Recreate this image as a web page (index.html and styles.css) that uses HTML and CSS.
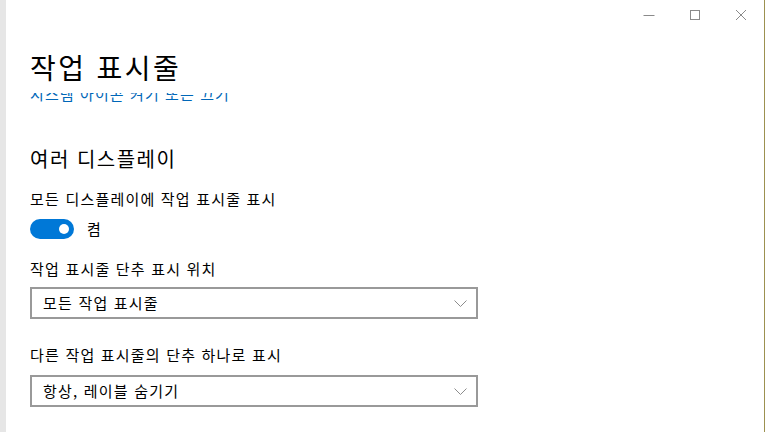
FILE: index.html
```html
<!DOCTYPE html>
<html lang="ko">
<head>
<meta charset="utf-8">
<link rel="stylesheet" href="styles.css">
</head>
<body>
<div class="window">
  <div class="strip"></div>
  <div class="main">
    <div class="titlebar">
      <button class="ctl" aria-label="최소화">
        <svg width="12" height="12" viewBox="0 0 12 12"><path d="M0.5 6.5h11" stroke="#8a8a8a" stroke-width="1" fill="none"/></svg>
      </button>
      <button class="ctl" aria-label="최대화">
        <svg width="12" height="12" viewBox="0 0 12 12"><rect x="1.5" y="1.5" width="9" height="9" stroke="#8a8a8a" stroke-width="1" fill="none"/></svg>
      </button>
      <button class="ctl" aria-label="닫기">
        <svg width="12" height="12" viewBox="0 0 12 12"><path d="M1 1L11 11M11 1L1 11" stroke="#8a8a8a" stroke-width="1" fill="none"/></svg>
      </button>
    </div>
    <header class="header">
      <h1 class="title">작업 표시줄</h1>
    </header>
    <div class="scroller">
      <div class="content">
        <a class="link" href="#">시스템 아이콘 켜기 또는 끄기</a>
        <h2 class="section">여러 디스플레이</h2>
        <div class="label first">모든 디스플레이에 작업 표시줄 표시</div>
        <div class="toggle-row">
          <span class="toggle"><span class="knob"></span></span>
          <span class="toggle-text">켬</span>
        </div>
        <div class="label">작업 표시줄 단추 표시 위치</div>
        <div class="select first-select">
          <span class="select-text">모든 작업 표시줄</span>
          <svg class="chev" width="13" height="7" viewBox="0 0 13 7"><path d="M0.5 0.5L6.5 6.5L12.5 0.5" stroke="#8c8c8c" stroke-width="1" fill="none"/></svg>
        </div>
        <div class="label gap">다른 작업 표시줄의 단추 하나로 표시</div>
        <div class="select">
          <span class="select-text">항상, 레이블 숨기기</span>
          <svg class="chev" width="13" height="7" viewBox="0 0 13 7"><path d="M0.5 0.5L6.5 6.5L12.5 0.5" stroke="#8c8c8c" stroke-width="1" fill="none"/></svg>
        </div>
      </div>
    </div>
  </div>
  <div class="edge"></div>
</div>
</body>
</html>
```

FILE: styles.css
```css
html, body {
  margin: 0;
  padding: 0;
  background: #ffffff;
}
body {
  font-family: "Noto Sans CJK KR", "Noto Sans", sans-serif;
  color: #000;
}
.window {
  display: flex;
  width: 765px;
  height: 432px;
  overflow: hidden;
}
.strip {
  width: 6px;
  background: #e6e6e6;
  flex: none;
}
.edge {
  width: 1px;
  background: #9c9150;
  flex: none;
}
.main {
  flex: 1;
  display: flex;
  flex-direction: column;
  min-width: 0;
}
.titlebar {
  height: 30px;
  display: flex;
  justify-content: flex-end;
  align-items: center;
  padding-right: 0;
  flex: none;
}
.ctl {
  width: 46px;
  height: 30px;
  border: 0;
  background: transparent;
  padding: 0;
  display: flex;
  align-items: center;
  justify-content: center;
}
.header {
  height: 63px;
  padding-left: 24px;
  flex: none;
}
.title {
  margin: 0;
  padding-top: 20px;
  font-size: 28px;
  font-weight: 400;
  line-height: 34px;
  letter-spacing: 2.4px;
}
.scroller {
  flex: 1;
  overflow: hidden;
  padding-left: 24px;
}
.content {
  margin-top: -9px;
  display: flex;
  flex-direction: column;
  align-items: flex-start;
}
.link {
  color: #0067b8;
  text-decoration: none;
  font-size: 15px;
  line-height: 20px;
  letter-spacing: 1.1px;
}
.section {
  margin: 41px 0 0;
  font-size: 20px;
  font-weight: 400;
  line-height: 28px;
  letter-spacing: 1.5px;
}
.label {
  font-size: 15px;
  line-height: 20px;
  margin-top: 18px;
  letter-spacing: 1.2px;
}
.label.first {
  margin-top: 16px;
}
.label.gap {
  margin-top: 26px;
}
.toggle-row {
  display: flex;
  align-items: center;
  margin-top: 8px;
  height: 24px;
}
.toggle {
  width: 44px;
  height: 20px;
  border-radius: 10px;
  background: #0078d7;
  position: relative;
  box-sizing: border-box;
}
.knob {
  position: absolute;
  width: 10px;
  height: 10px;
  border-radius: 50%;
  background: #fff;
  right: 5px;
  top: 5px;
}
.toggle-text {
  margin-left: 13px;
  font-size: 15px;
  line-height: 20px;
}
.select {
  margin-top: 10px;
  box-sizing: border-box;
  width: 448px;
  height: 32px;
  border: 2px solid #999999;
  display: flex;
  align-items: center;
  justify-content: space-between;
  padding: 0 9px 0 11px;
}
.select.first-select {
  margin-top: 8px;
}
.select-text {
  font-size: 15px;
  line-height: 20px;
  letter-spacing: 1.2px;
}
.chev {
  display: block;
}
```
